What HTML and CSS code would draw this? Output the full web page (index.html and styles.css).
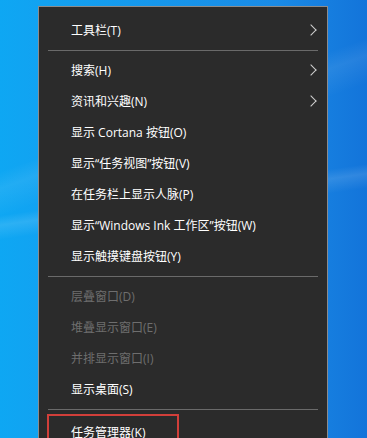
FILE: index.html
```html
<!DOCTYPE html>
<html lang="zh-CN">
<head>
    <meta charset="UTF-8">
    <title>任务栏菜单</title>
    <link rel="stylesheet" href="styles.css">
</head>
<body>

<!-- 任务栏右键菜单 -->
<div class="desktop">
    <ul class="menu">
        <li class="item sub">工具栏(T)</li>
        <li class="sep"></li>
        <li class="item sub">搜索(H)</li>
        <li class="item sub">资讯和兴趣(N)</li>
        <li class="item">显示 Cortana 按钮(O)</li>
        <li class="item">显示“任务视图”按钮(V)</li>
        <li class="item">在任务栏上显示人脉(P)</li>
        <li class="item">显示“Windows Ink 工作区”按钮(W)</li>
        <li class="item">显示触摸键盘按钮(Y)</li>
        <li class="sep"></li>
        <li class="item off">层叠窗口(D)</li>
        <li class="item off">堆叠显示窗口(E)</li>
        <li class="item off">并排显示窗口(I)</li>
        <li class="item">显示桌面(S)</li>
        <li class="sep"></li>
        <li class="item marked">任务管理器(K)</li>
    </ul>
</div>

</body>
</html>
```

FILE: styles.css
```css
* {
    box-sizing: border-box;
}
html, body {
    margin: 0;
    height: 100%;
}
body {
    overflow: hidden;
    font-family: "Open Sans", "Noto Sans CJK SC", sans-serif;
    font-size: 12px;
}

/* 桌面壁纸 */
.desktop {
    height: 100%;
    padding: 6px 0 0 38px;
    background:
        linear-gradient(172deg, transparent 44%, rgba(255,255,255,.12) 46%, transparent 49%),
        linear-gradient(160deg, transparent 30%, rgba(255,255,255,.08) 33%, transparent 38%),
        linear-gradient(90deg, #0ea7f3 0%, #12a2f1 12%, #1a8be6 75%, #1374da 100%);
}

.menu {
    list-style: none;
    margin: 0;
    padding: 8px 0 0;
    width: 290px;
    height: 460px;
    background-color: #2b2b2b;
    border: 1px solid #8c8c8c;
    color: #fff;
}
.item {
    position: relative;
    height: 31px;
    line-height: 31px;
    padding-left: 32px;
    white-space: nowrap;
}
.item.off {
    color: #6e6e6e;
}
.item.sub::after {
    content: '';
    position: absolute;
    right: 12px;
    top: 11px;
    width: 7px;
    height: 7px;
    border-top: 1px solid #d0d0d0;
    border-right: 1px solid #d0d0d0;
    transform: rotate(45deg);
}
.sep {
    height: 1px;
    margin: 4px 9px;
    background-color: #6a6a6a;
}
.item.marked {
    width: 132px;
    margin-left: 8px;
    padding-left: 22px;
    line-height: 33px;
    height: 40px;
    border: 2px solid #d23f3a;
}
```
